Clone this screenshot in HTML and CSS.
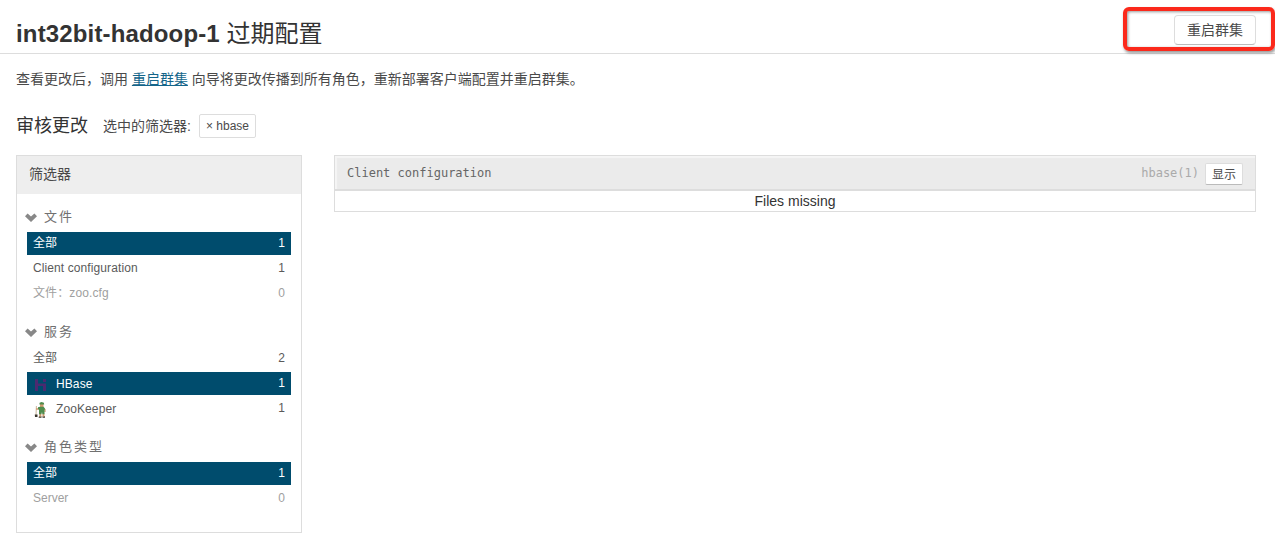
FILE: index.html
```html
<!DOCTYPE html>
<html lang="zh-CN">
<head>
<meta charset="utf-8">
<title>int32bit-hadoop-1 过期配置</title>
<link rel="stylesheet" href="styles.css">
</head>
<body>
<header class="page-header">
  <h1 class="title"><span class="cluster">int32bit-hadoop-1</span> 过期配置</h1>
  <div class="highlight"><button class="btn">重启群集</button></div>
</header>
<p class="intro">查看更改后，调用 <a class="link" href="#">重启群集</a> 向导将更改传播到所有角色，重新部署客户端配置并重启群集。</p>
<div class="review">
  <h2 class="review-title">审核更改</h2>
  <span class="review-label">选中的筛选器:</span>
  <span class="tag">× hbase</span>
</div>
<main class="columns">
  <aside class="filters">
    <div class="filters-head">筛选器</div>
    <section class="group">
      <h3 class="group-head"><svg class="chevron" viewBox="0 0 12 9"><path d="M0 3.200 2.600.6 6 3.500 9.400.6 12 3.200 6 9Z"/></svg>文件</h3>
      <div class="row active"><span>全部</span><span class="count">1</span></div>
      <div class="row"><span class="wide">Client configuration</span><span class="count">1</span></div>
      <div class="row muted"><span class="wide">文件：zoo.cfg</span><span class="count">0</span></div>
    </section>
    <section class="group">
      <h3 class="group-head"><svg class="chevron" viewBox="0 0 12 9"><path d="M0 3.200 2.600.6 6 3.500 9.400.6 12 3.200 6 9Z"/></svg>服务</h3>
      <div class="row"><span>全部</span><span class="count">2</span></div>
      <div class="row active"><span class="service"><svg class="icon" viewBox="0 0 16 16"><path fill="#4b2a70" d="M2 2h3v4.500h8V14h-3V9H5v5H2zM10 2h3v3h-3z"/></svg>HBase</span><span class="count">1</span></div>
      <div class="row"><span class="service"><svg class="icon" viewBox="0 0 16 16"><path stroke="#c4ad91" stroke-width=".9" d="M3.400 4 3 13"/><path fill="#39342d" d="M1.800 12.500h2.700V15H2zM6 14.300h2.500v1.500H5.600zM9.500 14.300H12v1.500H9.500z"/><path fill="#d39b70" d="M7 2h3.500v3H7zM3 6.300h2.500v1.400H3zM6.300 11.500h2v3h-2zM9.500 11.500h1.900v3H9.500zM11.300 7h1.300v3h-1.300z"/><path fill="#4f8c4d" d="M6.600.8 8.500 0l2.400.8.3 1.700H6.400zM5 5.300 7 4.700h3.600l1.500 2-.6 1.500v4H9.400L9 10l-.6 2.200H6V7.500H5z"/></svg>ZooKeeper</span><span class="count">1</span></div>
    </section>
    <section class="group">
      <h3 class="group-head"><svg class="chevron" viewBox="0 0 12 9"><path d="M0 3.200 2.600.6 6 3.500 9.400.6 12 3.200 6 9Z"/></svg>角色类型</h3>
      <div class="row active"><span>全部</span><span class="count">1</span></div>
      <div class="row muted"><span>Server</span><span class="count">0</span></div>
    </section>
  </aside>
  <section class="diff">
    <div class="diff-head">
      <span>Client configuration</span>
      <span class="diff-actions">hbase(1)<button class="btn btn-small">显示</button></span>
    </div>
    <div class="diff-body">Files missing</div>
  </section>
</main>
</body>
</html>
```
FILE: styles.css
```css
* { box-sizing: border-box; }
body {
  margin: 0;
  height: 550px;
  overflow: hidden;
  background: #fff;
  color: #4a4a4a;
  font: 14px/20px "Liberation Sans", "Noto Sans CJK SC", sans-serif;
}
h1, h2, h3, p { margin: 0; font-weight: normal; }
.page-header {
  display: flex;
  justify-content: space-between;
  height: 54px;
  padding: 7px 0 0 16px;
  border-bottom: 1px solid #ddd;
}
.title { color: #333; font-size: 24px; line-height: 54px; white-space: nowrap; }
.cluster { font-weight: bold; letter-spacing: .15px; }
.highlight {
  display: flex;
  align-items: center;
  justify-content: flex-end;
  width: 152px;
  height: 44px;
  padding: 2px 15px 0 0;
  border: 4px solid #fb291b;
  border-radius: 6px;
  box-shadow: 1px 2px 3px rgba(0, 0, 0, .4), inset 1px 1px 3px rgba(0, 0, 0, .4);
}
.btn {
  width: 82px;
  height: 30px;
  padding: 0;
  border: 1px solid #ddd;
  border-bottom-color: #bbb;
  border-radius: 4px;
  background: #fff;
  color: #4a4a4a;
  font: inherit;
}
.intro { padding: 15px 16px 0; white-space: nowrap; }
.link { color: #14658a; }
.review { display: flex; align-items: center; height: 24px; margin: 25px 16px 0; }
.review-title { width: 87px; color: #333; font-size: 18px; }
.review-label { width: 96px; }
.tag {
  height: 24px;
  padding: 0 6px;
  border: 1px solid #ddd;
  border-radius: 2px;
  font-size: 12px;
  line-height: 22px;
}
.columns { display: flex; align-items: flex-start; gap: 32px; padding: 17px 19px 0 16px; }
.filters {
  width: 286px;
  height: 378px;
  border: 1px solid #ddd;
  font-size: 12px;
}
.filters-head {
  height: 38px;
  margin-bottom: 6px;
  padding-left: 12px;
  background: #eee;
  font-size: 14px;
  line-height: 37px;
}
.group { margin-bottom: 10px; padding: 0 10px; }
.group-head {
  display: flex;
  align-items: center;
  height: 32px;
  padding-top: 1px;
  margin-left: -2px;
  color: #707070;
  font-size: 13px;
  letter-spacing: 2px;
}
.chevron { width: 12px; height: 9px; margin: 1px 7px 0 0; fill: #888; }
.row {
  display: flex;
  justify-content: space-between;
  height: 23px;
  margin-bottom: 2px;
  padding: 0 6px;
  color: #5a5a5a;
  line-height: 22px;
}
.row:last-child { margin-bottom: 0; }
.wide { letter-spacing: .1px; }
.active { background: #004c6d; color: #fff; }
.muted { color: #a0a0a0; }
.service { display: flex; line-height: 24px; letter-spacing: .1px; }
.icon { width: 16px; height: 16px; margin: 5px 7px 0 0; }
.diff { flex: 1; border: 1px solid #ddd; }
.diff-head {
  display: flex;
  align-items: center;
  justify-content: space-between;
  height: 35px;
  padding: 0 12px;
  border-bottom: 2px solid #ddd;
  background: #ebebeb;
  box-shadow: inset 2px 2px 1px #f5f5f5;
  color: #666;
  font: 12px "DejaVu Sans Mono", "Noto Sans CJK SC", monospace;
}
.diff-actions { display: flex; align-items: center; gap: 6px; color: #aaa; }
.btn-small {
  width: 38px;
  height: 22px;
  margin-top: 3px;
  border-radius: 2px;
  font: 12px/20px "Noto Sans CJK SC", sans-serif;
}
.diff-body { height: 20px; color: #333; text-align: center; }
```
